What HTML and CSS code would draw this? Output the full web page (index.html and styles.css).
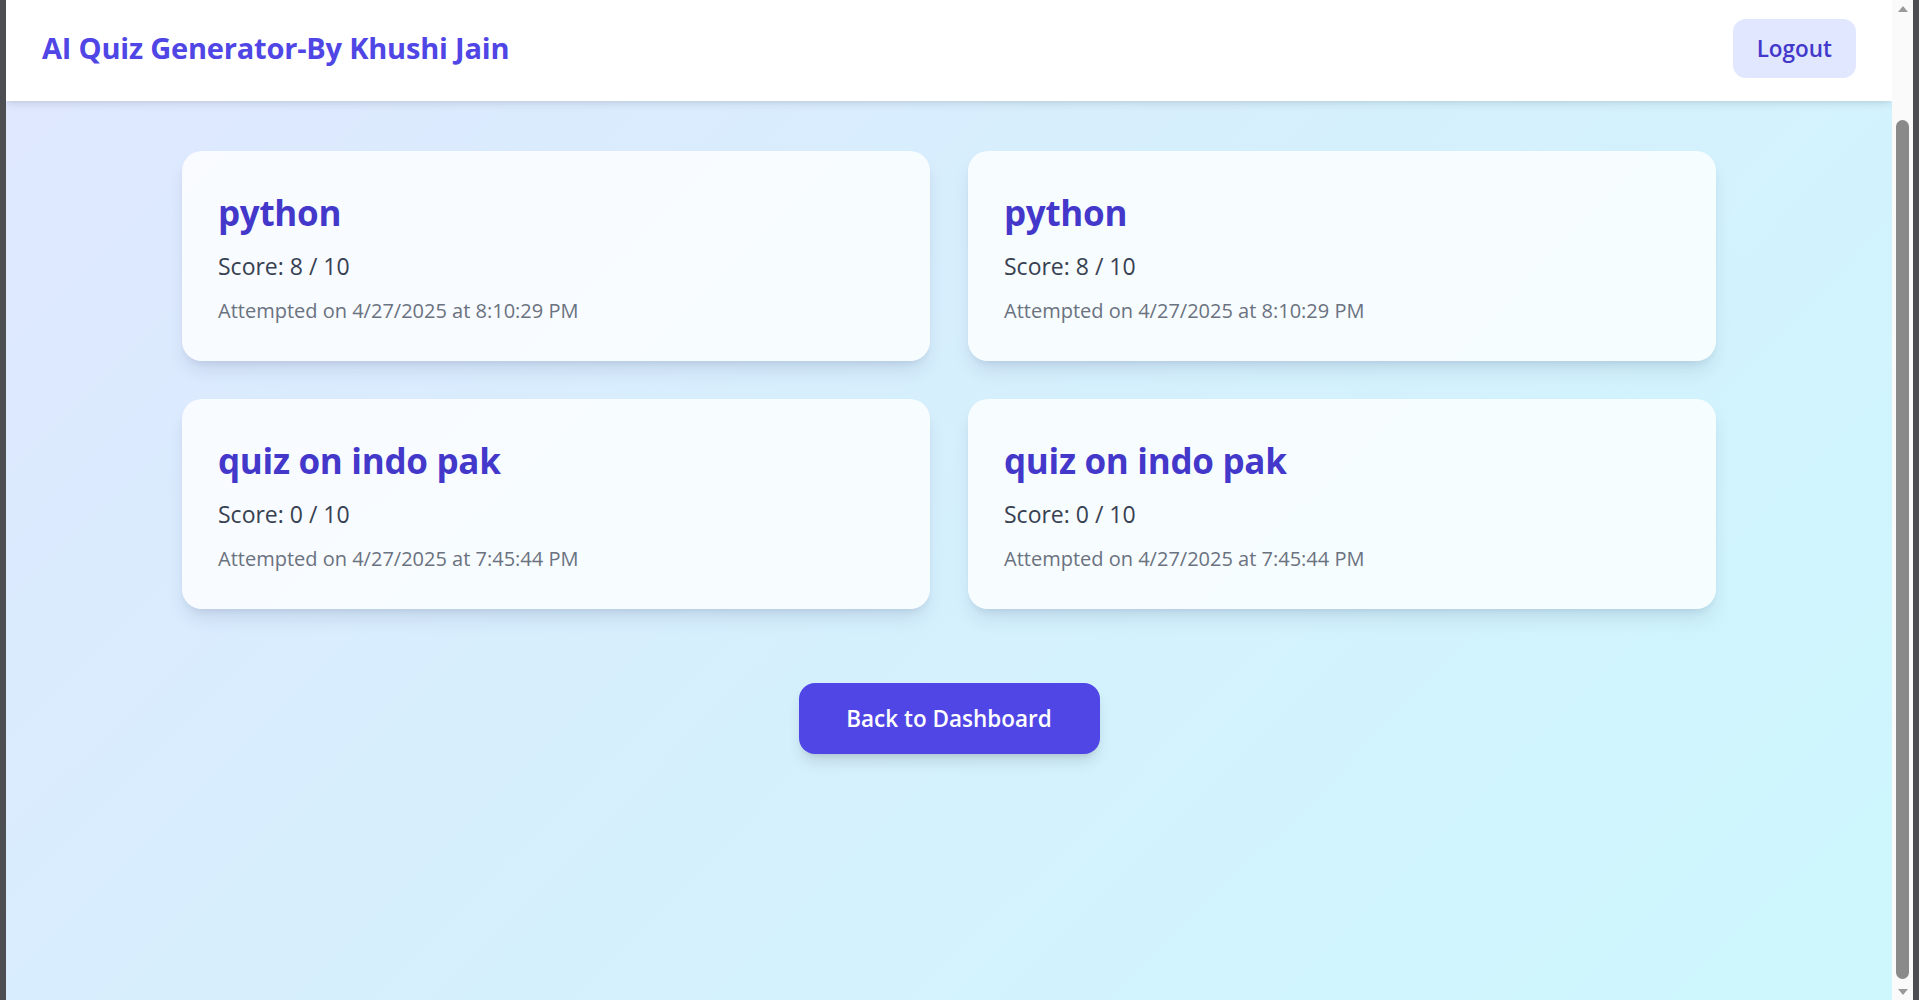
FILE: index.html
```html
<!DOCTYPE html>
<html lang="en">
<head>
<meta charset="utf-8">
<title>AI Quiz Generator - History</title>
<link rel="stylesheet" href="styles.css">
</head>
<body>
<div class="frame">
  <div class="frame-edge"></div>
  <div class="viewport">
    <header class="topbar">
      <h1 class="brand">AI Quiz Generator-By Khushi Jain</h1>
      <button class="logout">Logout</button>
    </header>
    <main class="content">
      <div class="grid">
        <div class="card">
          <h2 class="card-title">python</h2>
          <p class="score">Score: 8 / 10</p>
          <p class="date">Attempted on 4/27/2025 at 8:10:29 PM</p>
        </div>
        <div class="card">
          <h2 class="card-title">python</h2>
          <p class="score">Score: 8 / 10</p>
          <p class="date">Attempted on 4/27/2025 at 8:10:29 PM</p>
        </div>
        <div class="card">
          <h2 class="card-title">quiz on indo pak</h2>
          <p class="score">Score: 0 / 10</p>
          <p class="date">Attempted on 4/27/2025 at 7:45:44 PM</p>
        </div>
        <div class="card">
          <h2 class="card-title">quiz on indo pak</h2>
          <p class="score">Score: 0 / 10</p>
          <p class="date">Attempted on 4/27/2025 at 7:45:44 PM</p>
        </div>
      </div>
      <div class="actions">
        <button class="back">Back to Dashboard</button>
      </div>
    </main>
  </div>
  <div class="scrollbar">
    <svg class="arrow" width="20" height="16" viewBox="0 0 20 16"><path d="M5 12 L10 6 L15 12 Z" fill="#9a9a9a"/></svg>
    <div class="track"><div class="thumb"></div></div>
    <svg class="arrow" width="20" height="16" viewBox="0 0 20 16"><path d="M5 5 L10 11 L15 5 Z" fill="#9a9a9a"/></svg>
  </div>
  <div class="frame-edge"></div>
</div>
</body>
</html>
```

FILE: styles.css
```css
* { box-sizing: border-box; }

html, body {
  margin: 0;
  padding: 0;
  height: 100%;
  overflow: hidden;
}

body {
  font-family: "Open Sans", "Noto Sans", sans-serif;
  background: #4d4e52;
}

.frame {
  display: flex;
  height: 1000px;
}

.frame-edge {
  width: 6px;
  flex: none;
  background: #4d4e52;
}

.viewport {
  flex: 1;
  display: flex;
  flex-direction: column;
  background: linear-gradient(135deg, #e0e7ff 0%, #d6effd 45%, #cdf7fd 100%);
  overflow: hidden;
}

.topbar {
  height: 101px;
  flex: none;
  display: flex;
  align-items: center;
  justify-content: space-between;
  padding: 0 36px;
  background: #ffffff;
  box-shadow: 0 5px 8px -1px rgba(0,0,0,0.08), 0 2px 5px -2px rgba(0,0,0,0.08);
  position: relative;
  z-index: 1;
}

.brand {
  margin: -5px 0 0;
  font-size: 29px;
  font-weight: 700;
  line-height: 36px;
  color: #4f46e5;
  letter-spacing: -0.2px;
}

.logout {
  font-family: inherit;
  height: 59px;
  margin-top: -5px;
  padding: 0 24px;
  border: none;
  border-radius: 13px;
  background: #e0e7ff;
  color: #4338ca;
  font-size: 22.5px;
  font-weight: 600;
  cursor: pointer;
}

.content {
  padding-top: 50px;
  display: flex;
  flex-direction: column;
  align-items: center;
}

.grid {
  width: 1534px;
  display: grid;
  grid-template-columns: 1fr 1fr;
  gap: 38px;
}

.card {
  background: rgba(255,255,255,0.8);
  border-radius: 20px;
  padding: 36px 36px 35px;
  box-shadow: 0 12px 19px -4px rgba(30,40,90,0.12), 0 5px 8px -5px rgba(30,40,90,0.12);
}

.card-title {
  margin: 3px 0 14px;
  font-size: 35px;
  font-weight: 700;
  line-height: 45px;
  color: #4338ca;
  letter-spacing: -0.3px;
}

.score {
  margin: 0 0 12px;
  font-size: 23px;
  line-height: 35px;
  color: #374151;
}

.date {
  margin: 0;
  font-size: 20px;
  line-height: 30px;
  color: #6b7280;
}

.actions {
  margin-top: 74px;
}

.back {
  font-family: inherit;
  width: 301px;
  height: 71px;
  border: none;
  border-radius: 16px;
  background: #4f46e5;
  color: #ffffff;
  font-size: 22.5px;
  font-weight: 600;
  box-shadow: 0 10px 15px -3px rgba(0,0,0,0.12), 0 4px 6px -4px rgba(0,0,0,0.12);
  cursor: pointer;
}

.scrollbar {
  width: 21px;
  flex: none;
  background: #fafafa;
  display: flex;
  flex-direction: column;
  align-items: center;
}

.arrow {
  flex: none;
  display: block;
}

.track {
  flex: 1;
  width: 100%;
  display: flex;
  justify-content: center;
  padding: 104px 0 5px;
}

.thumb {
  width: 13px;
  height: 100%;
  background: #8a8a8a;
  border-radius: 7px;
}
```
